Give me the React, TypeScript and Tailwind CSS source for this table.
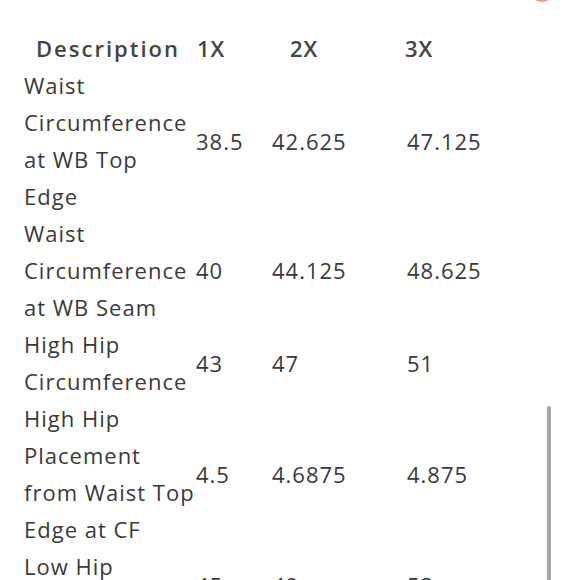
import React from "react";

const rows = [
  { desc: "Waist Circumference at WB Top Edge", lines: ["Waist", "Circumference", "at WB Top", "Edge"], v: ["38.5", "42.625", "47.125"] },
  { desc: "Waist Circumference at WB Seam", lines: ["Waist", "Circumference", "at WB Seam"], v: ["40", "44.125", "48.625"] },
  { desc: "High Hip Circumference", lines: ["High Hip", "Circumference"], v: ["43", "47", "51"] },
  { desc: "High Hip Placement from Waist Top Edge at CF", lines: ["High Hip", "Placement", "from Waist Top", "Edge at CF"], v: ["4.5", "4.6875", "4.875"] },
  { desc: "Low Hip Circumference", lines: ["Low Hip", "Circumference"], v: ["45", "49", "53"] },
];

export default function App() {
  return (
    <div className="relative w-[580px] h-[580px] overflow-hidden bg-white text-[#3a3a3a] font-['Open_Sans',sans-serif]">
      {/* close button edge peeking from above */}
      <div className="absolute -top-[24px] right-[25px] w-[26px] h-[26px] rounded-full border-2 border-[#e3a48e]" />

      <div className="pt-[30px]">
        <div className="grid grid-cols-[161px_93px_115px_1fr] pl-[36px] h-[37px] items-center text-[22px] font-semibold tracking-[2px] text-[#444]">
          <div>Description</div>
          <div className="tracking-[1px]">1X</div>
          <div className="tracking-[1px]">2X</div>
          <div className="tracking-[1px]">3X</div>
        </div>

        {rows.map((r) => (
          <div key={r.desc} className="grid grid-cols-[172px_76px_135px_1fr] pl-[24px] items-center text-[22px] leading-[37px] tracking-[1px]">
            <div>
              {r.lines.map((l) => (
                <div key={l} className="whitespace-nowrap">{l}</div>
              ))}
            </div>
            <div>{r.v[0]}</div>
            <div>{r.v[1]}</div>
            <div>{r.v[2]}</div>
          </div>
        ))}
      </div>

      <div className="absolute right-[29px] top-[406px] w-[4px] h-[190px] rounded-full bg-[#a6a6a6]" />
    </div>
  );
}
